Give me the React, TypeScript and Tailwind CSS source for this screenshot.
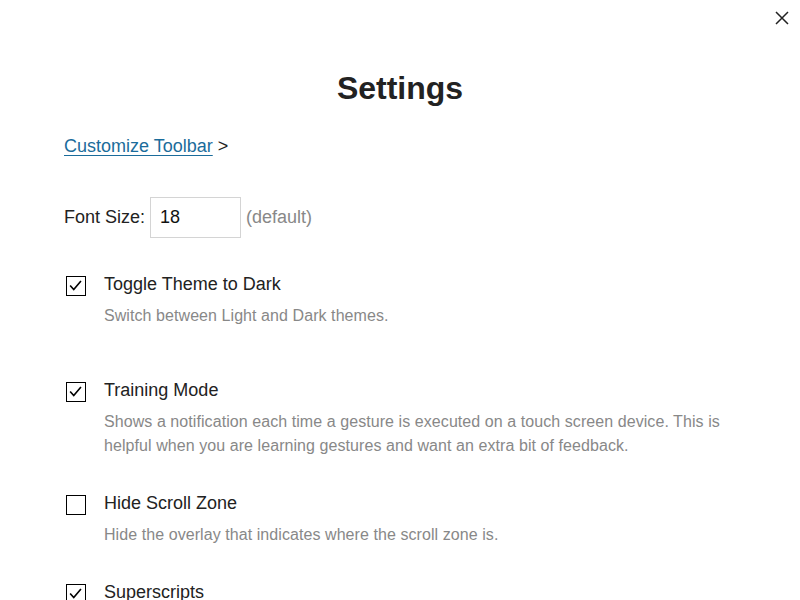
type Setting = {
  label: string;
  description: string;
  checked: boolean;
  gap: string;
};

const settings: Setting[] = [
  {
    label: 'Toggle Theme to Dark',
    description: 'Switch between Light and Dark themes.',
    checked: true,
    gap: 'mt-[35px]',
  },
  {
    label: 'Training Mode',
    description:
      'Shows a notification each time a gesture is executed on a touch screen device. This is helpful when you are learning gestures and want an extra bit of feedback.',
    checked: true,
    gap: 'mt-[51px]',
  },
  {
    label: 'Hide Scroll Zone',
    description: 'Hide the overlay that indicates where the scroll zone is.',
    checked: false,
    gap: 'mt-[34px]',
  },
  {
    label: 'Superscripts',
    description: 'Show verse numbers as superscripts in the text.',
    checked: true,
    gap: 'mt-[34px]',
  },
];

function Checkbox({ checked }: { checked: boolean }) {
  return (
    <span className="mt-[3px] ml-[2px] flex h-[20px] w-[20px] flex-shrink-0 items-center justify-center border-[1.5px] border-black bg-white">
      {checked && (
        <svg viewBox="0 0 20 20" className="h-[20px] w-[20px]" fill="none">
          <path d="M3.5 9.5 L7.5 14 L15.5 4.5" stroke="#000" strokeWidth="1.8" />
        </svg>
      )}
    </span>
  );
}

export default function App() {
  return (
    <div className="relative h-[600px] w-full overflow-hidden bg-white font-['Liberation_Sans',Arial,sans-serif] text-[#222]">
      <button className="absolute right-[10px] top-[10px]">
        <svg viewBox="0 0 16 16" className="h-[16px] w-[16px]" fill="none">
          <path d="M2 2 L14 14 M14 2 L2 14" stroke="#222" strokeWidth="1.5" />
        </svg>
      </button>

      <div className="px-[64px] pt-[70px]">
        <h1 className="text-center text-[32px] font-bold leading-[36px] text-[#222]">Settings</h1>

        <div className="mt-[29px] text-[18px] leading-[22px]">
          <a href="#" className="text-[#1b6c9b] underline underline-offset-[3px]">
            Customize Toolbar
          </a>
          <span className="ml-[5px]">&gt;</span>
        </div>

        <div className="mt-[40px] flex items-center text-[18px]">
          <span>Font Size:</span>
          <input
            defaultValue="18"
            className="ml-[5px] h-[41px] w-[91px] border border-[#d4d4d4] px-[9px] text-[18px] text-[#111] outline-none"
          />
          <span className="ml-[5px] text-[#888]">(default)</span>
        </div>

        {settings.map((s) => (
          <div key={s.label} className={`${s.gap} flex gap-[18px]`}>
            <Checkbox checked={s.checked} />
            <div className="flex-1">
              <div className="text-[18px] leading-[22px] text-[#222]">{s.label}</div>
              <p className="mt-[9px] text-[16px] leading-[24px] tracking-[0.07px] text-[#888]">{s.description}</p>
            </div>
          </div>
        ))}
      </div>
    </div>
  );
}
